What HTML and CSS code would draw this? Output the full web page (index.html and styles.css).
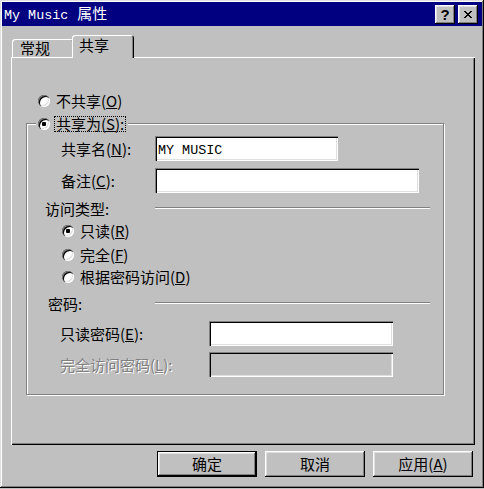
FILE: index.html
```html
<!DOCTYPE html>
<html lang="zh-CN">
<head>
<meta charset="utf-8">
<title>My Music 属性</title>
<link rel="stylesheet" href="styles.css">
</head>
<body>
<div class="window">
  <div class="titlebar">
    <span class="title"><span class="mono">My Music</span><span class="t-cjk">属性</span></span>
    <div class="tb-buttons">
      <div class="tb-btn"><span class="q">?</span></div>
      <div class="tb-btn">
        <svg width="8" height="7" viewBox="0 0 8 7"><path d="M0 0h2v1h-2zM6 0h2v1h-2zM1 1h2v1h-2zM5 1h2v1h-2zM2 2h4v1h-4zM3 3h2v1h-2zM2 4h4v1h-4zM1 5h2v1h-2zM5 5h2v1h-2zM0 6h2v1h-2zM6 6h2v1h-2z" fill="#000"/></svg>
      </div>
    </div>
  </div>
  <div class="body">
    <div class="tabs">
      <div class="tab">常规</div>
      <div class="tab active">共享</div>
    </div>
    <div class="panel">
      <div class="opt first"><span class="radio"></span><span>不共享(<u>O</u>)</span></div>
      <div class="group">
        <div class="legend"><span class="radio checked"></span><span class="focus">共享为(<u>S</u>):</span></div>
        <div class="row r-name"><span class="lbl l-name">共享名(<u>N</u>):</span><div class="field w-name"><span class="mono">MY MUSIC</span></div></div>
        <div class="row r-note"><span class="lbl l-name">备注(<u>C</u>):</span><div class="field w-note"></div></div>
        <div class="row r-type"><span class="lbl l-type">访问类型:</span><div class="sep"></div></div>
        <div class="opt sub s1"><span class="radio checked"></span><span>只读(<u>R</u>)</span></div>
        <div class="opt sub s2"><span class="radio"></span><span>完全(<u>F</u>)</span></div>
        <div class="opt sub s3"><span class="radio"></span><span>根据密码访问(<u>D</u>)</span></div>
        <div class="row r-pw"><span class="lbl l-pw">密码:</span><div class="sep"></div></div>
        <div class="row r-ro"><span class="lbl l-ro">只读密码(<u>E</u>):</span><div class="field w-pw"></div></div>
        <div class="row r-full"><span class="lbl l-ro disabled">完全访问密码(<u>L</u>):</span><div class="field w-pw off"></div></div>
      </div>
    </div>
    <div class="buttons">
      <div class="btn default">确定</div>
      <div class="btn">取消</div>
      <div class="btn">应用(<u>A</u>)</div>
    </div>
  </div>
</div>
</body>
</html>
```
FILE: styles.css
```css
html, body {
  margin: 0;
  padding: 0;
  background: #c0c0c0;
}
body {
  font-family: "Noto Sans CJK SC", "Noto Sans", sans-serif;
  font-size: 15px;
  line-height: 16px;
  color: #000;
}
u { text-decoration: underline; text-underline-offset: 1px; }
.mono {
  font-family: "Liberation Mono", "DejaVu Sans Mono", monospace;
  font-size: 13.4px;
}
.window {
  width: 484px;
  height: 488px;
  box-sizing: border-box;
  padding: 2px;
  background: #c0c0c0;
  box-shadow: inset -1px -1px #000, inset 1px 1px #dfdfdf, inset -2px -2px #808080, inset 2px 2px #fff;
  display: flex;
  flex-direction: column;
}
.titlebar {
  height: 24px;
  background: #000080;
  display: flex;
  align-items: center;
  justify-content: space-between;
  padding: 0 4px 0 2px;
}
.title {
  color: #fff;
  white-space: nowrap;
  line-height: 18px;
  display: flex;
  align-items: baseline;
}
.t-cjk { margin-left: 9px; }
.tb-buttons {
  display: flex;
  gap: 3px;
}
.tb-btn {
  width: 20px;
  height: 19px;
  box-sizing: border-box;
  background: #c0c0c0;
  box-shadow: inset -1px -1px #000, inset 1px 1px #fff, inset -2px -2px #808080, inset 2px 2px #dfdfdf;
  display: flex;
  align-items: center;
  justify-content: center;
}
.q {
  font-family: "Liberation Sans", Arial, sans-serif;
  font-weight: bold;
  font-size: 15px;
  line-height: 15px;
  margin-top: 1px;
}
.body {
  padding: 9px 7px 0 9px;
}
.tabs {
  display: flex;
  align-items: flex-end;
  height: 22px;
  padding-left: 1px;
  position: relative;
  z-index: 1;
}
.tab {
  width: 62px;
  height: 18px;
  box-sizing: border-box;
  padding-left: 8px;
  line-height: 18px;
  background: #c0c0c0;
  border-radius: 3px 3px 0 0;
  box-shadow: inset 1px 1px #fff, inset -1px 0 #000, inset -2px 0 #808080;
}
.tab.active {
  height: 23px;
  margin-left: -2px;
  margin-bottom: -1px;
  width: 62px;
  padding-left: 7px;
  line-height: 19px;
}
.panel {
  height: 388px;
  box-sizing: border-box;
  padding: 36px 0 0 15px;
  box-shadow: inset 1px 1px #fff, inset -1px -1px #000, inset -2px -2px #808080;
}
.opt {
  display: flex;
  align-items: center;
  height: 16px;
  gap: 6px;
}
.opt.first { padding-left: 12px; }
.radio {
  width: 12px;
  height: 12px;
  border-radius: 50%;
  background: #fff;
  box-shadow: inset 1px 1px #808080, inset 2px 2px #000, inset -1px -1px #fff, inset -2px -2px #dfdfdf;
  position: relative;
  flex: none;
}
.radio.checked::after {
  content: "";
  position: absolute;
  left: 4px;
  top: 4px;
  width: 4px;
  height: 4px;
  border-radius: 1px;
  background: #000;
}
.group {
  margin-top: 14px;
  width: 418px;
  height: 272px;
  box-sizing: border-box;
  border: 1px solid #808080;
  box-shadow: 1px 1px #fff, inset 1px 1px #fff;
}
.legend {
  display: flex;
  align-items: center;
  gap: 4px;
  width: fit-content;
  height: 16px;
  margin: -8px 0 0 9px;
  padding: 0 2px;
  background: #c0c0c0;
}
.focus {
  border: 1px dotted #000;
  padding: 0 1px;
  line-height: 14px;
}
.row {
  display: flex;
  align-items: center;
}
.lbl {
  box-sizing: border-box;
  white-space: nowrap;
  flex: none;
}
.l-name { width: 128px; padding-left: 34px; }
.l-type { width: 128px; padding-left: 18px; }
.l-pw { width: 128px; padding-left: 21px; }
.l-ro { width: 182px; padding-left: 33px; }
.disabled {
  color: #808080;
  text-shadow: 1px 1px #fff;
}
.field {
  height: 25px;
  box-sizing: border-box;
  background: #fff;
  box-shadow: inset 1px 1px #808080, inset 2px 2px #000, inset -1px -1px #fff, inset -2px -2px #dfdfdf;
  padding: 4px 3px 0;
  line-height: 16px;
}
.field.off { background: #c0c0c0; }
.w-name { width: 183px; }
.w-note { width: 264px; }
.w-pw { width: 184px; }
.r-name { margin-top: 4px; }
.r-note { margin-top: 7px; }
.r-type { margin-top: 8px; height: 16px; }
.r-pw { margin-top: 11px; height: 16px; }
.r-ro { margin-top: 9px; }
.r-full { margin-top: 6px; }
.sep {
  width: 275px;
  height: 2px;
  box-sizing: border-box;
  border-top: 1px solid #808080;
  border-bottom: 1px solid #fff;
  margin-bottom: 3px;
}
.sub { padding-left: 35px; }
.s1 { margin-top: 6px; }
.s2 { margin-top: 8px; }
.s3 { margin-top: 6px; }
.buttons {
  display: flex;
  justify-content: flex-end;
  gap: 8px;
  margin-top: 6px;
  padding-right: 2px;
}
.btn {
  width: 100px;
  height: 26px;
  box-sizing: border-box;
  display: flex;
  align-items: center;
  justify-content: center;
  background: #c0c0c0;
  box-shadow: inset -1px -1px #000, inset 1px 1px #fff, inset -2px -2px #808080, inset 2px 2px #dfdfdf;
}
.btn.default {
  border: 1px solid #000;
}
```
